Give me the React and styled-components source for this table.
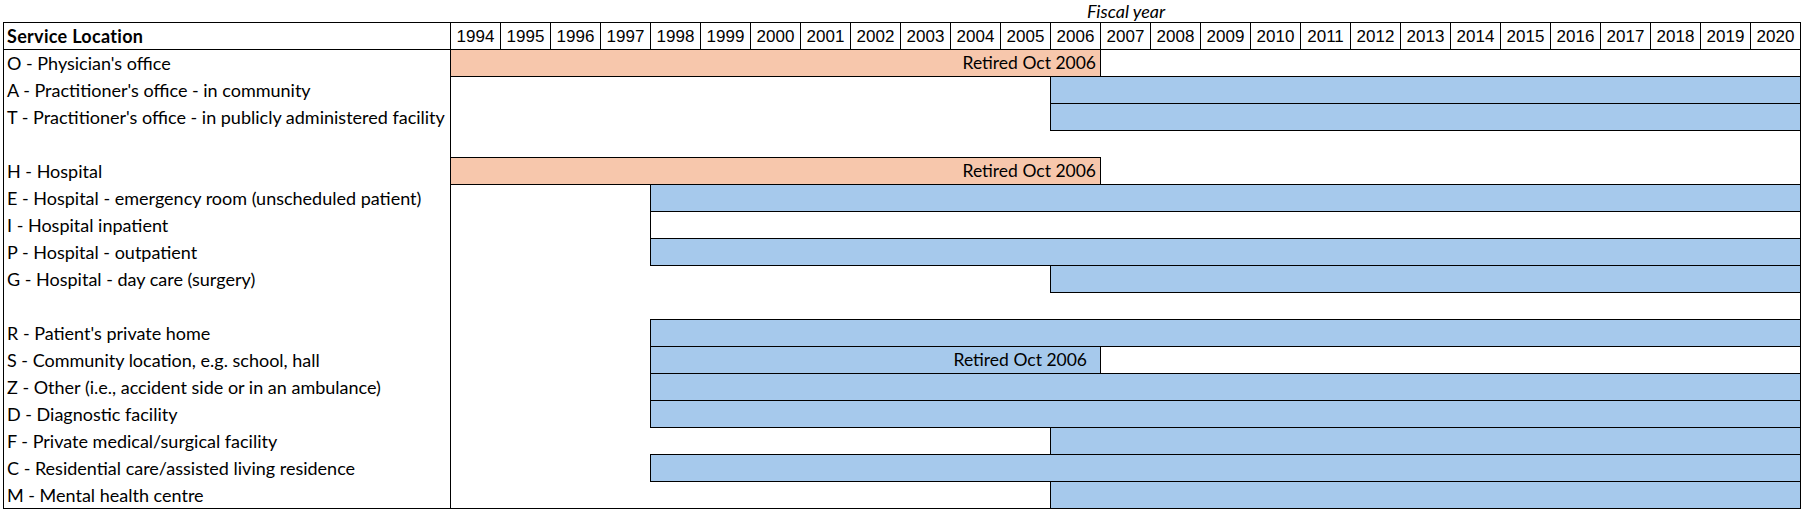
import React from 'react';
import styled, { createGlobalStyle } from 'styled-components';

const FIRST_YEAR = 1994;
const LAST_YEAR = 2020;
const YEAR_WIDTH = 50;

const years = [];
for (let y = FIRST_YEAR; y <= LAST_YEAR; y++) years.push(y);

const tones = {
  active: '#a6c9ec',
  retired: '#f7c7ac',
  empty: '#ffffff'
};

// each bar runs from the first to the last fiscal year, both inclusive
const rows = [
  { label: "O - Physician's office", bars: [{ from: 1994, to: 2006, tone: 'retired', note: 'Retired Oct 2006' }] },
  { label: "A - Practitioner's office - in community", bars: [{ from: 2006, to: 2020, tone: 'active' }] },
  { label: "T - Practitioner's office - in publicly administered facility", bars: [{ from: 2006, to: 2020, tone: 'active' }] },
  { label: '', bars: [] },
  { label: 'H - Hospital', bars: [{ from: 1994, to: 2006, tone: 'retired', note: 'Retired Oct 2006' }] },
  { label: 'E - Hospital - emergency room (unscheduled patient)', bars: [{ from: 1998, to: 2020, tone: 'active' }] },
  { label: 'I - Hospital inpatient', bars: [{ from: 1998, to: 2020, tone: 'empty' }] },
  { label: 'P - Hospital - outpatient', bars: [{ from: 1998, to: 2020, tone: 'active' }] },
  { label: 'G - Hospital - day care (surgery)', bars: [{ from: 2006, to: 2020, tone: 'active' }] },
  { label: '', bars: [] },
  { label: "R - Patient's private home", bars: [{ from: 1998, to: 2020, tone: 'active' }] },
  {
    label: 'S - Community location, e.g. school, hall',
    bars: [
      { from: 1998, to: 2006, tone: 'active', note: 'Retired Oct 2006', inset: 13 },
      { from: 2007, to: 2020, tone: 'empty' }
    ]
  },
  { label: 'Z - Other (i.e., accident side or in an ambulance)', bars: [{ from: 1998, to: 2020, tone: 'active' }] },
  { label: 'D - Diagnostic facility', bars: [{ from: 1998, to: 2020, tone: 'active' }] },
  { label: 'F - Private medical/surgical facility', bars: [{ from: 2006, to: 2020, tone: 'active' }] },
  { label: 'C - Residential care/assisted living residence', bars: [{ from: 1998, to: 2020, tone: 'active' }] },
  { label: 'M - Mental health centre', bars: [{ from: 2006, to: 2020, tone: 'active' }] }
];

const GlobalStyle = createGlobalStyle`
  body {
    margin: 0;
    background: #ffffff;
    color: #000000;
    font-family: Lato, "Liberation Sans", sans-serif;
  }
`;

const Sheet = styled.div`
  padding-left: 3px;
  width: 1798px;
`;

const Caption = styled.div`
  margin-left: 448px;
  width: 1350px;
  height: 22px;
  line-height: 22px;
  text-align: center;
  font-size: 18px;
  font-style: italic;
`;

const Table = styled.div`
  box-sizing: border-box;
  width: 1798px;
  border: 1px solid #000;
  border-bottom: none;
`;

const Row = styled.div`
  display: grid;
  grid-template-columns: 447px repeat(${LAST_YEAR - FIRST_YEAR}, ${YEAR_WIDTH}px) ${YEAR_WIDTH - 1}px;
  box-sizing: border-box;
  height: 27px;

  &:last-child {
    border-bottom: 1px solid #000;
  }
`;

const HeaderRow = styled(Row)`
  border-bottom: 1px solid #000;
`;

const LabelCell = styled.div`
  grid-column: 1;
  grid-row: 1;
  box-sizing: border-box;
  border-right: 1px solid #000;
  padding-left: 3px;
  font-size: 18px;
  font-weight: ${p => (p.$bold ? 700 : 400)};
  letter-spacing: ${p => (p.$bold ? '0.3px' : 'normal')};
  line-height: 26px;
  white-space: nowrap;
`;

const YearCell = styled.div`
  box-sizing: border-box;
  border-right: 1px solid #000;
  padding-top: 1px;
  font-family: "Liberation Sans", Arial, sans-serif;
  font-size: 17px;
  line-height: 25px;
  text-align: center;

  &:last-child {
    border-right: none;
  }
`;

const Bar = styled.div`
  grid-row: 1;
  grid-column-start: ${p => p.$start};
  align-self: start;
  position: relative;
  box-sizing: border-box;
  width: ${p => p.$span * YEAR_WIDTH + 1}px;
  height: 28px;
  margin: -1px 0 0 -1px;
  border: 1px solid #000;
  background: ${p => tones[p.$tone]};
  padding-right: ${p => p.$inset}px;
  font-size: 17.5px;
  line-height: 26px;
  text-align: right;
  white-space: nowrap;
`;

const App = () => {
  return (
    <Sheet>
      <GlobalStyle />
      <Caption>Fiscal year</Caption>
      <Table>
        <HeaderRow>
          <LabelCell $bold>Service Location</LabelCell>
          {years.map(year => (
            <YearCell key={year}>{year}</YearCell>
          ))}
        </HeaderRow>
        {rows.map((row, i) => (
          <Row key={i}>
            <LabelCell>{row.label}</LabelCell>
            {row.bars.map(bar => (
              <Bar
                key={bar.from}
                $start={bar.from - FIRST_YEAR + 2}
                $span={bar.to - bar.from + 1}
                $tone={bar.tone}
                $inset={bar.inset || 4}
              >
                {bar.note}
              </Bar>
            ))}
          </Row>
        ))}
      </Table>
    </Sheet>
  );
};

export default App;
